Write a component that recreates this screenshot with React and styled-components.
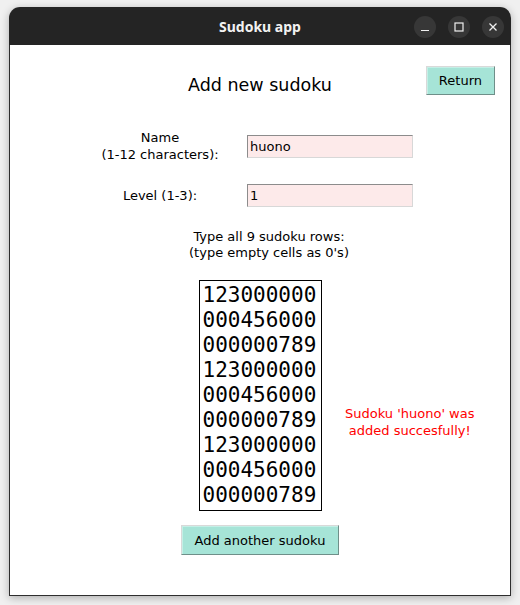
import React from "react";
import styled, { createGlobalStyle } from "styled-components";

const Global = createGlobalStyle`
  html, body { margin: 0; padding: 0; }
  body {
    background: #f0f0f0;
    font-family: "DejaVu Sans", sans-serif;
    width: 520px;
    height: 605px;
    overflow: hidden;
  }
  #root { padding: 7px 9px 0 9px; }
`;

const Window = styled.div`
  width: 502px;
  height: 589px;
  display: flex;
  flex-direction: column;
  border-radius: 11px 11px 0 0;
  box-shadow: 0 2px 9px rgba(0, 0, 0, 0.28);
  overflow: hidden;
`;

const TitleBar = styled.div`
  height: 38px;
  flex: none;
  background: #242424;
  display: grid;
  grid-template-columns: 1fr auto 1fr;
  align-items: center;
`;

const Title = styled.div`
  grid-column: 2;
  color: #f2f2f2;
  font-family: "Noto Sans", sans-serif;
  font-weight: 700;
  font-size: 14px;
  line-height: 18px;
  margin-top: 1px;
`;

const WinButtons = styled.div`
  grid-column: 3;
  justify-self: end;
  display: flex;
  gap: 12px;
  padding-right: 7px;
  margin-top: 1px;
`;

const WinButton = styled.div`
  width: 22px;
  height: 22px;
  border-radius: 50%;
  background: #373737;
  display: flex;
  align-items: center;
  justify-content: center;
`;

const Content = styled.div`
  flex: 1;
  background: #ffffff;
  border: 1px solid #2e2e2e;
  border-top: none;
  display: flex;
  flex-direction: column;
  align-items: stretch;
`;

const Header = styled.div`
  display: grid;
  grid-template-columns: 1fr auto 1fr;
  align-items: start;
  padding-top: 21px;
`;

const Heading = styled.div`
  grid-column: 2;
  font-size: 17.5px;
  line-height: 22px;
  color: #000;
  margin-top: 8px;
`;

const TkButton = styled.button`
  font-family: "DejaVu Sans", sans-serif;
  font-size: 13px;
  color: #000;
  background: #a6e4d7;
  height: ${(p) => p.$h}px;
  padding: 0 ${(p) => p.$px}px;
  border: 1px solid #d9d9d9;
  border-right-color: #6f8f89;
  border-bottom-color: #6f8f89;
  box-shadow: inset 1px 1px 0 #c4efe6;
  cursor: pointer;
`;

const ReturnCell = styled.div`
  grid-column: 3;
  justify-self: end;
  padding-right: 15px;
`;

const Form = styled.div`
  display: grid;
  grid-template-columns: 134px 166px;
  column-gap: 20px;
  row-gap: 21px;
  align-items: center;
  margin: 33px 0 0 83px;
`;

const Label = styled.div`
  font-size: 13px;
  line-height: 17px;
  text-align: center;
  color: #000;
`;

const Entry = styled.input`
  box-sizing: border-box;
  width: 166px;
  height: 23px;
  margin: 0;
  padding: 0 2px;
  font-family: "DejaVu Sans", sans-serif;
  font-size: 13px;
  color: #000;
  background: #fdeaea;
  border: 1px solid #d8d8d8;
  border-top-color: #8c8c8c;
  border-left-color: #8c8c8c;
  outline: none;
`;

const Instructions = styled.div`
  font-size: 13px;
  line-height: 16px;
  text-align: center;
  color: #000;
  margin-top: 22px;
  padding-left: 18px;
`;

const SudokuRow = styled.div`
  display: grid;
  grid-template-columns: 1fr auto 1fr;
  margin-top: 19px;
`;

const Grid = styled.textarea`
  grid-column: 2;
  box-sizing: border-box;
  width: 123px;
  height: 231px;
  margin: 0;
  padding: 2px 3px;
  font-family: "DejaVu Sans Mono", monospace;
  font-size: 21px;
  line-height: 25px;
  color: #000;
  background: #fff;
  border: 1px solid #000;
  resize: none;
  overflow: hidden;
  outline: none;
`;

const Message = styled.div`
  grid-column: 3;
  justify-self: center;
  align-self: start;
  margin-top: 125px;
  padding-right: 12px;
  font-size: 13px;
  line-height: 17px;
  text-align: center;
  color: #ff0000;
`;

const BottomRow = styled.div`
  display: flex;
  justify-content: center;
  margin-top: 14px;
`;

const rows = [
  "123000000",
  "000456000",
  "000000789",
  "123000000",
  "000456000",
  "000000789",
  "123000000",
  "000456000",
  "000000789",
];

export default function App() {
  return (
    <>
      <Global />
      <Window>
        <TitleBar>
          <Title>Sudoku app</Title>
          <WinButtons>
            <WinButton>
              <svg width="10" height="10" viewBox="0 0 10 10">
                <line x1="1" y1="8.5" x2="9" y2="8.5" stroke="#f0f0f0" strokeWidth="1.2" />
              </svg>
            </WinButton>
            <WinButton>
              <svg width="10" height="10" viewBox="0 0 10 10">
                <rect x="1" y="1" width="8" height="8" fill="none" stroke="#f0f0f0" strokeWidth="1.2" />
              </svg>
            </WinButton>
            <WinButton>
              <svg width="10" height="10" viewBox="0 0 10 10">
                <path d="M1.5 1.5 L8.5 8.5 M8.5 1.5 L1.5 8.5" stroke="#f0f0f0" strokeWidth="1.3" />
              </svg>
            </WinButton>
          </WinButtons>
        </TitleBar>
        <Content>
          <Header>
            <Heading>Add new sudoku</Heading>
            <ReturnCell>
              <TkButton $h={29} $px={12}>Return</TkButton>
            </ReturnCell>
          </Header>
          <Form>
            <Label>
              Name
              <br />
              (1-12 characters):
            </Label>
            <Entry defaultValue="huono" />
            <Label>Level (1-3):</Label>
            <Entry defaultValue="1" />
          </Form>
          <Instructions>
            Type all 9 sudoku rows:
            <br />
            (type empty cells as 0's)
          </Instructions>
          <SudokuRow>
            <Grid defaultValue={rows.join("\n")} spellCheck={false} />
            <Message>
              Sudoku 'huono' was
              <br />
              added succesfully!
            </Message>
          </SudokuRow>
          <BottomRow>
            <TkButton $h={30} $px={13}>Add another sudoku</TkButton>
          </BottomRow>
        </Content>
      </Window>
    </>
  );
}
